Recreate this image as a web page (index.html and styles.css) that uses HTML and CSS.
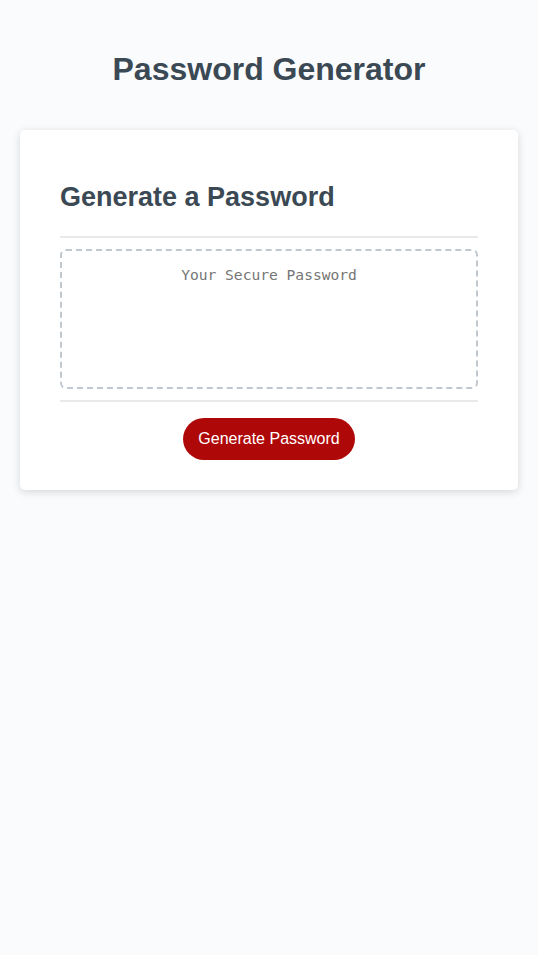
FILE: index.html
```html
<!DOCTYPE html>
<html lang="en">
<head>
<meta charset="UTF-8">
<title>Password Generator</title>
<link rel="stylesheet" href="styles.css">
</head>
<body>
<div class="wrapper">
  <header>
    <h1>Password Generator</h1>
  </header>
  <div class="card">
    <div class="card-header">
      <h2>Generate a Password</h2>
    </div>
    <div class="card-body">
      <textarea readonly id="password" placeholder="Your Secure Password" aria-label="Generated Password"></textarea>
    </div>
    <div class="card-footer">
      <button id="generate" class="btn">Generate Password</button>
    </div>
  </div>
</div>
</body>
</html>
```

FILE: styles.css
```css
*,
*::before,
*::after {
  box-sizing: border-box;
}

html,
body,
.wrapper {
  height: 100%;
  margin: 0;
  padding: 0;
}

body {
  font-family: "Liberation Sans", Arial, sans-serif;
  background-color: #f9fbfd;
}

.wrapper {
  padding-top: 30px;
  padding-left: 20px;
  padding-right: 20px;
}

header {
  text-align: center;
  padding: 0 20px 20px;
  color: hsl(206, 17%, 28%);
}

header h1 {
  font-size: 32px;
  line-height: 37px;
  margin: 21px 0 22px;
}

.card {
  background-color: #fff;
  border-radius: 5px;
  box-shadow: rgba(0, 0, 0, 0.15) 0px 2px 8px 0px;
  color: hsl(206, 17%, 28%);
  font-size: 18px;
  margin: 0 auto;
  max-width: 800px;
  padding: 30px 40px;
}

.card-header h2 {
  font-size: 27px;
  line-height: 31px;
  margin: 22px 0 23px;
}

.card-header::after {
  content: " ";
  display: block;
  width: 100%;
  background: #e7e9eb;
  height: 2px;
}

.card-body {
  min-height: 100px;
}

#password {
  appearance: none;
  -webkit-appearance: none;
  display: block;
  width: 100%;
  height: 140px;
  padding: 15px 15px 85px;
  font-family: "DejaVu Sans Mono", "Liberation Mono", monospace;
  font-size: 14.6px;
  line-height: 18px;
  text-align: center;
  margin: 11px 0 11px;
  border: 2px dashed #c0c7cf;
  border-radius: 6px;
  resize: none;
  overflow: hidden;
  background: #fff;
  color: #3b4852;
}

#password::placeholder {
  color: #757575;
  opacity: 1;
}

.card-footer {
  text-align: center;
}

.card-footer::before {
  content: " ";
  display: block;
  width: 100%;
  background: #e7e9eb;
  height: 2px;
}

.btn {
  border: none;
  background-color: hsl(360, 91%, 36%);
  border-radius: 25px;
  color: #fff;
  display: block;
  margin: 16px auto 0;
  font-family: "Liberation Sans", Arial, sans-serif;
  font-size: 16px;
  line-height: 22px;
  padding: 10px 15px;
  text-align: center;
  cursor: pointer;
}
```
